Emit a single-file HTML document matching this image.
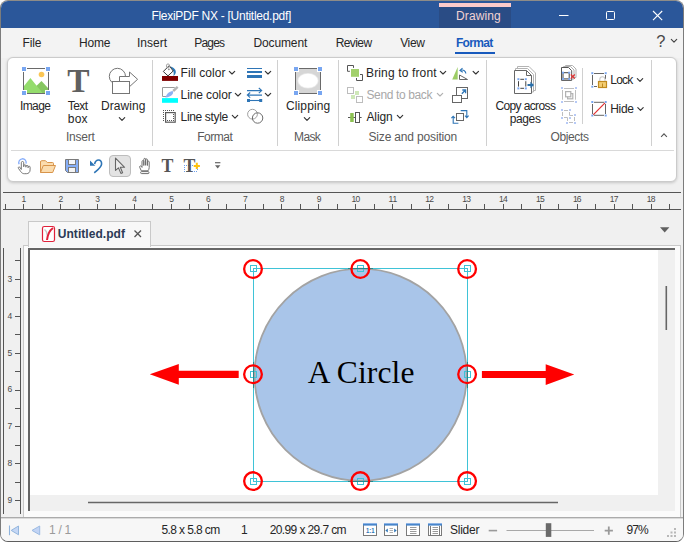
<!DOCTYPE html>
<html><head><meta charset="utf-8"><title>FlexiPDF NX - [Untitled.pdf]</title>
<style>
html,body{margin:0;padding:0;}
body{width:684px;height:542px;overflow:hidden;background:#fff;font-family:"Liberation Sans",sans-serif;position:relative;}
.t{position:absolute;white-space:pre;}
#win{position:absolute;left:0;top:0;width:682px;height:540px;border:1px solid #7c7c7c;border-top-color:#8e8c88;border-bottom-color:#5e5e5e;border-radius:8px;overflow:hidden;background:#f0f0f0;box-sizing:content-box;}
#win>*{position:absolute;}
#title{left:0;top:0;width:682px;height:27px;background:#2b579a;}
#ctx{left:438px;top:2px;width:72px;height:25px;background:#2a4c85;}
#ctx i{position:absolute;left:0;top:0;width:72px;height:4px;background:#fdcaca;}
#menu{left:0;top:27px;width:682px;height:30px;background:#f3f3f3;}
#fmtul{left:454px;top:51px;width:40px;height:2px;background:#185abd;}
#ribbon{left:6px;top:56px;width:670px;height:125px;background:#fff;border-radius:6px;box-sizing:border-box;border:1px solid #cbcbcb;box-shadow:0 1px 3px rgba(0,0,0,.18);}
.sep{width:1px;background:#d0d0d0;top:59px;height:86px;}
#qsel{left:108px;top:154px;width:20px;height:20px;background:#e3e3e3;border:1px solid #bdbdbd;border-radius:4px;}
#rdiv{left:10px;top:149px;width:663px;height:1px;background:#d9d9d9;}
#hruler{left:2px;top:191px;width:678px;height:16px;border-top:1px solid #555;border-bottom:1px solid #555;}
#vruler{left:2px;top:247px;width:16px;height:266px;border-left:1px solid #555;border-right:1px solid #555;}
#frame{left:22px;top:244px;width:656px;height:271px;background:#fbfbfb;border:1px solid #c9c9c9;}
#tab{left:27px;top:220px;width:121px;height:25px;background:#f8f8f8;border:1px solid #c9c9c9;border-bottom:none;}
#view{left:27px;top:247px;width:645px;height:261px;background:#f0f0f0;border-left:2px solid #666;border-top:2px solid #666;}
#page{left:29px;top:249px;width:628px;height:245px;background:#fff;}
#status{left:0;top:516px;width:682px;height:24px;background:#f7f7f7;border-top:1px solid #ababab;box-shadow:inset 0 1px 0 #dadada;}
#ov{position:absolute;left:0;top:0;}

</style></head>
<body>
<div id="win">
 <div id="title"></div>
 <div id="ctx"><i></i></div>
 <div id="menu"></div>
 <div id="fmtul"></div>
 <div id="ribbon"></div>
 <div class="sep" style="left:151px"></div>
 <div class="sep" style="left:276px"></div>
 <div class="sep" style="left:337px"></div>
 <div class="sep" style="left:485px"></div>
 <div class="sep" style="left:650px"></div>
 <div class="sep" style="left:581px;top:67px;height:56px"></div>
 <div id="rdiv"></div>
 <div id="qsel"></div>
 <div id="hruler"></div>
 <div id="vruler"></div>
 <div id="frame"></div>
 <div id="tab"></div>
 <div id="view"></div>
 <div id="page"></div>
 <div id="status"></div>
</div>
<svg id="ov" width="684" height="542" viewBox="0 0 684 542">
<defs>
 <path id="chev" d="M-2.7 -1.4 L0 1.3 L2.7 -1.4" fill="none" stroke-width="1.15" stroke-linecap="round" stroke-linejoin="round"/>
 <rect id="bd" x="-1" y="-1" width="2" height="2" fill="#7aa7f0"/>
</defs>
<!-- window controls -->
<g stroke="#fff" stroke-width="1" fill="none">
 <path d="M559 15.5H568.5"/>
 <rect x="606.5" y="11.5" width="8" height="8" rx="1"/>
 <path d="M653 11l9.2 9.2M662.2 11l-9.2 9.2" stroke-width="1.1"/>
</g>
<use href="#chev" x="674" y="40.8" stroke="#444"/>

<!-- Image icon -->
<g id="ic-image">
 <rect x="23.5" y="68.5" width="25" height="25" fill="#fff" stroke="#6a6a6a" stroke-width="1"/>
 <circle cx="41.5" cy="74.5" r="2.8" fill="#fbc655"/>
 <path d="M36 86.2 L41.5 81 L48 88 V93 H42Z" fill="#86c660"/>
 <path d="M24 86 L30.4 78 L42.5 93 H24Z" fill="#94dc6c"/>
 <g fill="#78a6f1" stroke="#fff" stroke-width="1"><rect x="21.5" y="66.5" width="5" height="5"/><rect x="45.5" y="66.5" width="5" height="5"/><rect x="21.5" y="90.5" width="5" height="5"/><rect x="45.5" y="90.5" width="5" height="5"/></g>
</g>
<!-- Drawing icon -->
<g fill="#fff" stroke="#757575" stroke-width="1">
 <circle cx="117.4" cy="76.4" r="8.1"/>
 <path d="M119.5 76.5 H129.5 V72 L137.6 79.3 L129.5 86.7 V82.2 H119.5Z"/>
 <rect x="112.5" y="81.5" width="17" height="12"/>
</g>
<use href="#chev" x="122" y="119" stroke="#333"/>

<!-- Fill color -->
<rect x="162" y="76" width="16" height="4.9" fill="#800000"/>
<path d="M170.3 66.6C173 67 176 69.3 175.8 72.3C175.7 73.8 174.8 75 173.4 76C173.9 74 173.8 72.4 173.2 71Z" fill="#2b7bba"/>
<path d="M163.3 71.5L169.2 65.6L173.2 71L168 75.9Z" fill="#fff" stroke="#3a3a3a" stroke-width="1"/>
<ellipse cx="168" cy="65.9" rx="1.6" ry="2" fill="none" stroke="#9a9a9a" stroke-width=".9"/>
<circle cx="168.9" cy="69.3" r=".9" fill="#8a8a8a"/>
<use href="#chev" x="232" y="72.7" stroke="#333"/>
<!-- Line color -->
<rect x="162" y="98.1" width="16" height="4.7" fill="#00ffff"/>
<path d="M174.7 87.5H162.5V96.5H166" fill="none" stroke="#9a9a9a" stroke-width="1"/>
<path d="M177.7 86.8L173.2 91" stroke="#b4b4b4" stroke-width="2.4" stroke-linecap="butt"/>
<path d="M165.3 97.6C166.3 94 169.5 91.2 172.6 90.9C174.3 92.7 172 96.8 165.3 97.6Z" fill="#8fb2f3"/>
<use href="#chev" x="238" y="94.7" stroke="#333"/>
<!-- Line style -->
<g fill="#555">
 <rect x="163" y="110" width="1" height="1"/><rect x="165" y="110" width="1" height="1"/><rect x="167" y="110" width="1" height="1"/><rect x="169" y="110" width="1" height="1"/><rect x="171" y="110" width="1" height="1"/><rect x="173" y="110" width="1" height="1"/>
 <rect x="163" y="112" width="1" height="1"/><rect x="163" y="114" width="1" height="1"/><rect x="163" y="116" width="1" height="1"/><rect x="163" y="118" width="1" height="1"/><rect x="163" y="120" width="1" height="1"/>
 <rect x="173" y="114" width="1" height="1"/><rect x="173" y="116" width="1" height="1"/><rect x="173" y="118" width="1" height="1"/><rect x="173" y="120" width="1" height="1"/>
 <rect x="167" y="120" width="1" height="1"/><rect x="169" y="120" width="1" height="1"/><rect x="171" y="120" width="1" height="1"/>
</g>
<rect x="165.6" y="112.6" width="9.6" height="9.6" fill="none" stroke="#5a5a5a" stroke-width="1.2"/>
<use href="#chev" x="235" y="116.8" stroke="#333"/>
<!-- line weight -->
<g fill="#2e75b6"><rect x="247" y="68" width="15" height="1"/><rect x="247" y="71" width="15" height="2"/><rect x="247" y="75" width="15" height="3"/></g>
<use href="#chev" x="268" y="72.7" stroke="#333"/>
<!-- arrows -->
<g stroke="#2e75b6" stroke-width="1.1" fill="none">
 <path d="M247 90.6H261.5M258.8 88 l2.9 2.6 -2.9 2.6"/>
 <path d="M262 95.1H247.5M250.2 92.5 l-2.9 2.6 2.9 2.6"/>
 <path d="M248 100.5H261"/>
</g>
<rect x="247" y="99" width="3" height="3" fill="#2e75b6"/><rect x="259.2" y="99" width="3" height="3" fill="#2e75b6"/>
<use href="#chev" x="268" y="94.7" stroke="#333"/>
<!-- circles -->
<circle cx="252.5" cy="114.2" r="4.9" fill="none" stroke="#a0a0a0" stroke-width="1"/>
<circle cx="257.6" cy="118" r="5.2" fill="none" stroke="#6e6e6e" stroke-width="1"/>

<!-- Clipping -->
<rect x="295.5" y="68.5" width="25" height="25" fill="#d6d6d6" stroke="#6a6a6a" stroke-width="1"/>
<ellipse cx="308" cy="80.8" rx="10.6" ry="7.8" fill="#e9e9e9"/>
<ellipse cx="308" cy="80.8" rx="9.8" ry="7" fill="#fff"/>
<g fill="#78a6f1" stroke="#fff" stroke-width="1"><rect x="293.5" y="66.5" width="5" height="5"/><rect x="317.5" y="66.5" width="5" height="5"/><rect x="293.5" y="90.5" width="5" height="5"/><rect x="317.5" y="90.5" width="5" height="5"/></g>
<use href="#chev" x="307" y="119" stroke="#333"/>

<!-- Bring to front -->
<rect x="351" y="69" width="8" height="7.8" fill="#a2d06c"/>
<path d="M353.5 67.9V65.5H347.5V71.3H349.9M360 74.5H362.5V80.5H356.5V78" fill="none" stroke="#555" stroke-width="1"/>
<use href="#chev" x="443" y="72.7" stroke="#333"/>
<!-- Send to back -->
<rect x="347.5" y="87.5" width="6" height="6" fill="#fff" stroke="#bdbdbd"/>
<rect x="356.5" y="96.5" width="6" height="6" fill="#fff" stroke="#bdbdbd"/>
<rect x="355" y="91" width="4" height="4" fill="#cfe8b8"/><rect x="351" y="95" width="4" height="4" fill="#cfe8b8"/>
<use href="#chev" x="440" y="94.7" stroke="#b0b0b0"/>
<!-- Align -->
<path d="M348 117.5H361.6" stroke="#555" stroke-width="1"/>
<rect x="350.2" y="113" width="3.5" height="9" fill="#8cc152"/>
<rect x="355.5" y="112.5" width="4" height="10" fill="#fff" stroke="#555"/>
<use href="#chev" x="400" y="116.8" stroke="#333"/>
<!-- flip -->
<path d="M452.2 79.6H457.7V67.1Z" fill="#9ccc65"/>
<path d="M459.5 79.5H467.5L459.5 75Z" fill="#fff" stroke="#666" stroke-width="1"/>
<path d="M465.8 73.5C465.8 71 463.5 69.5 461 70.2" fill="none" stroke="#2e75b6" stroke-width="1.2"/>
<path d="M462.5 68.2L460 70.5L462.8 72.2" fill="none" stroke="#2e75b6" stroke-width="1.1"/>
<use href="#chev" x="475.8" y="72.7" stroke="#333"/>
<!-- resize -->
<rect x="456.5" y="87.5" width="11" height="11" fill="#fff" stroke="#666"/>
<rect x="452.5" y="95.5" width="9" height="7" fill="#fff" stroke="#666"/>
<path d="M461.8 93.8L465.3 90.3M462.3 90H465.6V93.3" fill="none" stroke="#2e75b6" stroke-width="1.3"/>
<!-- rotate -->
<rect x="456.5" y="113.5" width="7" height="7" fill="#fff" stroke="#666"/>
<g fill="none" stroke="#2e75b6" stroke-width="1.1">
 <path d="M460.7 110.6H466.8V117.5M465 115.6l1.8 2 1.8-2"/>
 <path d="M458.4 123.2H453.2V116.3M451.4 118.2l1.8-2 1.8 2"/>
</g>

<!-- Copy across pages -->
<g fill="#fff" stroke="#b4b4b4" stroke-width="1">
 <path d="M517.5 66.5H529L535.5 73V90.5H517.5Z"/>
 <path d="M515.5 68.5H527.5L533.5 74.5V92H515.5Z"/>
</g>
<path d="M514.5 70.5H526.5L531.5 75.5V93.5H514.5Z" fill="#fff" stroke="#666" stroke-width="1"/>
<path d="M526.5 70.5V75.5H531.5" fill="none" stroke="#666" stroke-width="1"/>
<path d="M520.3 79.3H524M520.3 88.3H524M518.5 81.2V86.6M525.8 81.2V86.6" fill="none" stroke="#444" stroke-width="1"/>
<use href="#bd" x="518.4" y="79.2"/><use href="#bd" x="525.8" y="79.2"/><use href="#bd" x="518.4" y="88.4"/><use href="#bd" x="525.8" y="88.4"/>
<path d="M527.5 85H532" fill="none" stroke="#2b70aa" stroke-width="2"/>
<path d="M530.4 81.8L534 85L530.4 88.2Z" fill="#2b70aa"/>
<!-- small 1 -->
<g fill="#fff" stroke="#b0b0b0" stroke-width="1">
 <path d="M565.5 65.5H572.5L576 69V77.5H565.5Z"/>
 <path d="M563.5 66.5H570.5L574 70V79H563.5Z"/>
</g>
<path d="M561.5 67.5H568.5L571.7 70.7V80.4H561.5Z" fill="#fff" stroke="#555" stroke-width="1"/>
<rect x="563" y="72.7" width="6.2" height="6.2" fill="none" stroke="#444"/>
<use href="#bd" x="563" y="72.7"/><use href="#bd" x="569.2" y="72.7"/><use href="#bd" x="563" y="78.9"/><use href="#bd" x="569.2" y="78.9"/>
<path d="M570.8 74.5l4 4.2M574.8 74.5l-4 4.2" stroke="#e03030" stroke-width="1.2"/>
<!-- small 2 (disabled) -->
<g fill="#fff" stroke="#bebebe" stroke-width="1">
 <path d="M564 88.5H574M564 101.5H574M562.5 90V99.7M575.5 90V99.7" fill="none"/>
 </g>
<g fill="#fff" stroke="#b2b2b2" stroke-width="1.2"><rect x="567.6" y="93.6" width="5.2" height="5.2"/><rect x="565.6" y="91.6" width="5.2" height="5.2"/></g>
<g fill="#b7caf6"><rect x="561" y="87" width="2" height="2"/><rect x="575" y="87" width="2" height="2"/><rect x="561" y="101" width="2" height="2"/><rect x="575" y="101" width="2" height="2"/></g>
<!-- small 3 (disabled) -->
<path d="M564 110.5H568M562.5 112V116M569.5 112V115.5H573M564 117.5H567.5V121M574.5 117V121M569 122.5H573" fill="none" stroke="#bebebe" stroke-width="1"/>
<g fill="#b7caf6"><rect x="561" y="109" width="2" height="2"/><rect x="569" y="109" width="2" height="2"/><rect x="561" y="117" width="2" height="2"/><rect x="569" y="117" width="2" height="2"/><rect x="574" y="114" width="2" height="2"/><rect x="566" y="122" width="2" height="2"/><rect x="574" y="122" width="2" height="2"/></g>
<!-- Lock -->
<path d="M594 73.5H604M592.5 75V85M594 86.5H597M605.5 75V79" fill="none" stroke="#666" stroke-width="1"/>
<use href="#bd" x="592.3" y="73.2"/><use href="#bd" x="605.7" y="73.2"/><use href="#bd" x="592.3" y="86.7"/>
<path d="M599.8 81V79.3a2.6 2.6 0 0 1 5.2 0V81" fill="none" stroke="#c8c8c8" stroke-width="1.1"/>
<rect x="598.5" y="81.5" width="8" height="6" fill="#f3cd72" stroke="#c08a1e" stroke-width="1.2"/>
<path d="M602.5 83.5V87.5" stroke="#c08a1e" stroke-width="1"/>
<use href="#chev" x="640" y="80" stroke="#333"/>
<!-- Hide -->
<path d="M594 102.3H604M592.5 104V114M594 115.3H604M605.5 104V114" fill="none" stroke="#666" stroke-width="1"/>
<path d="M593.2 114.8L605 102.8" stroke="#e23030" stroke-width="1.2"/>
<use href="#bd" x="592.3" y="102"/><use href="#bd" x="605.7" y="102"/><use href="#bd" x="592.3" y="115.5"/><use href="#bd" x="605.7" y="115.5"/>
<use href="#chev" x="640.5" y="109" stroke="#333"/>
<!-- collapse caret -->
<path d="M661.1 136.8L664 133.9L666.9 136.8" fill="none" stroke="#555" stroke-width="1.1"/>

<!-- quick access toolbar -->
<!-- touch hand -->
<path d="M19.2 164.2a3.7 3.7 0 1 1 6.8-.6" fill="none" stroke="#86adfb" stroke-width="1.3"/>
<path d="M21.3 169.5V162.7a1.2 1.2 0 0 1 2.4 0V166.8V165.9a1.1 1.1 0 0 1 2.2 0V167.2V166.5a1.1 1.1 0 0 1 2.2 0V167.8V167.2a1 1 0 0 1 2 0V169.8c0 2.4-1.5 3.9-3.8 3.9h-2c-1.5 0-2.5-.7-3.4-1.9l-2.5-3.5c-.6-.9.5-1.9 1.4-1.1L21.3 169.5" fill="#fff" stroke="#777" stroke-width="1" stroke-linejoin="round"/>
<!-- folder -->
<path d="M40.5 172.5V162a1.3 1.3 0 0 1 1.3-1.3H45.5l1.8 1.8H52.5a1 1 0 0 1 1 1V165.5" fill="#fbdcae" stroke="#d8944a" stroke-width="1" stroke-linejoin="round"/>
<path d="M40.5 172.5L43.3 165.5H55.5L52.7 172.5Z" fill="#fbdcae" stroke="#d8944a" stroke-width="1" stroke-linejoin="round"/>
<!-- save -->
<path d="M65.5 159.5H78.5V172.5H67.5L65.5 170.5Z" fill="#86aef6" stroke="#7a7a7a" stroke-width="1"/>
<rect x="68.5" y="159.5" width="7" height="5" fill="#f4f6fb" stroke="#7a7a7a" stroke-width="1"/>
<rect x="68.5" y="167.5" width="7" height="5" fill="#f4f4f4" stroke="#7a7a7a" stroke-width="1"/>
<!-- undo -->
<path d="M94.6 164C95.8 158.8 101.8 158.6 101.6 164C101.4 167.4 97.5 170 94.3 172.8" fill="none" stroke="#2e75b6" stroke-width="1.6" stroke-linecap="butt"/>
<path d="M90 160.6V165.8H95.3Z" fill="#2e75b6"/>
<!-- cursor -->
<path d="M115.5 158.2V170.4L118.5 167.9L120.9 173.4L122.6 172.7L120.3 167.3H124.6Z" fill="#ececec" stroke="#666" stroke-width="1.1" stroke-linejoin="round"/>
<!-- hand -->
<path d="M141.3 170.8L139.7 167.3c-.5-1.2 1-2 1.7-.9l.6 1V161.5a.9.9 0 0 1 1.8 0V165.5V159.3a.9.9 0 0 1 1.8 0V165.3V159.8a.9.9 0 0 1 1.8 0V165.5V162a.9.9 0 0 1 1.8 0V167.5c0 1.4-.5 2.3-1.2 3.3Z" fill="#fff" stroke="#6e6e6e" stroke-width="1" stroke-linejoin="round"/>
<rect x="140.6" y="171.6" width="8.4" height="2" rx="1" fill="#fff" stroke="#6e6e6e" stroke-width="1"/>
<!-- T+ -->
<g fill="#6d9eeb"><rect x="184" y="165" width="1" height="1"/><rect x="184" y="171" width="1" height="1"/><rect x="186" y="165" width="1" height="1"/><rect x="186" y="171" width="1" height="1"/><rect x="188" y="165" width="1" height="1"/><rect x="188" y="171" width="1" height="1"/><rect x="190" y="165" width="1" height="1"/><rect x="190" y="171" width="1" height="1"/><rect x="192" y="165" width="1" height="1"/><rect x="192" y="171" width="1" height="1"/><rect x="194" y="165" width="1" height="1"/><rect x="194" y="171" width="1" height="1"/><rect x="196" y="165" width="1" height="1"/><rect x="196" y="171" width="1" height="1"/><rect x="184" y="167" width="1" height="1"/><rect x="197" y="167" width="1" height="1"/><rect x="184" y="169" width="1" height="1"/><rect x="197" y="169" width="1" height="1"/></g>
<path d="M196.8 162.8V169M193.7 165.9H199.9" stroke="#ffc20e" stroke-width="2"/>
<!-- dropdown -->
<path d="M215 162.7H220.4" stroke="#666" stroke-width="1.2"/>
<path d="M215 165.2H220.4L217.7 168.6Z" fill="#666"/>

<!-- tab dropdown triangle -->
<path d="M660 227.2H669.4L664.7 232.4Z" fill="#606060"/>
<!-- pdf icon -->
<rect x="42.5" y="226.5" width="12" height="15" rx="1.8" fill="#fff" stroke="#e0213a" stroke-width="1.2"/>
<path d="M44.5 229.5C46.5 231 47.3 233 47.2 235.5" fill="none" stroke="#c8c8c8" stroke-width="1.3"/>
<path d="M53 228C49.5 230.5 47.6 234.5 47 240" fill="none" stroke="#e0213a" stroke-width="2"/>
<!-- tab close -->
<path d="M134.5 230.5l6.5 6.5M141 230.5l-6.5 6.5" stroke="#555" stroke-width="1.3"/>
<path d="M5.5 204V209M23.5 204V209M42.5 204V209M60.5 204V209M79.5 204V209M97.5 204V209M115.5 204V209M134.5 204V209M152.5 204V209M171.5 204V209M189.5 204V209M208.5 204V209M226.5 204V209M245.5 204V209M263.5 204V209M281.5 204V209M300.5 204V209M318.5 204V209M337.5 204V209M355.5 204V209M374.5 204V209M392.5 204V209M411.5 204V209M429.5 204V209M448.5 204V209M466.5 204V209M484.5 204V209M503.5 204V209M521.5 204V209M540.5 204V209M558.5 204V209M577.5 204V209M595.5 204V209M614.5 204V209M632.5 204V209M651.5 204V209M669.5 204V209" stroke="#555" stroke-width="1" fill="none"/><path d="M15 260.5H20M15 279.5H20M15 297.5H20M15 316.5H20M15 334.5H20M15 353.5H20M15 371.5H20M15 390.5H20M15 408.5H20M15 426.5H20M15 445.5H20M15 463.5H20M15 482.5H20M15 500.5H20" stroke="#555" stroke-width="1" fill="none"/><!-- canvas -->
<g id="canvas">
 <circle cx="360.6" cy="374.8" r="106.1" fill="#a9c5e9" stroke="#a3a3a3" stroke-width="1.8"/>
 <path d="M149.8 374.3L178.8 364V370.8H238.7V378H178.8V384.7Z" fill="#ff0000"/>
 <path d="M574.3 374.5L545.7 364.2V371H481.9V378H545.7V384.9Z" fill="#ff0000"/>
 <g fill="none" stroke="#3fc3d7" stroke-width="1">
  <rect x="250.5" y="265.5" width="6" height="6"/><rect x="250.5" y="371.5" width="6" height="6"/><rect x="250.5" y="478.5" width="6" height="6"/><rect x="357.5" y="265.5" width="6" height="6"/><rect x="357.5" y="478.5" width="6" height="6"/><rect x="464.5" y="265.5" width="6" height="6"/><rect x="464.5" y="371.5" width="6" height="6"/><rect x="464.5" y="478.5" width="6" height="6"/>
  <rect x="253.5" y="268.5" width="214" height="213"/>
 </g>
 <path d="M348 268.5H373M348 481.5H373M253.5 362V388M467.5 362V388" stroke="#23898d" stroke-width="1" fill="none"/>
 <g fill="none" stroke="#ff0000" stroke-width="2.3">
  <circle cx="253" cy="269" r="8.85"/><circle cx="253" cy="374.2" r="8.85"/><circle cx="253" cy="481.1" r="8.85"/><circle cx="360.3" cy="269" r="8.85"/><circle cx="360.3" cy="481.1" r="8.85"/><circle cx="467.1" cy="269" r="8.85"/><circle cx="467.1" cy="374.2" r="8.85"/><circle cx="467.1" cy="481.1" r="8.85"/>
 </g>
</g>
<!-- scrollbars -->
<path d="M666.3 286V330" stroke="#666" stroke-width="1.6"/>
<path d="M88 502.5H558" stroke="#666" stroke-width="1.6"/>
<!-- status icons -->
<g stroke-width="1">
 <path d="M9.5 525.5V535.2" fill="none" stroke="#8fb3dc" stroke-width="1.1"/>
 <path d="M18.5 526L11.2 530.4L18.5 534.8Z" fill="#c5d7f5" stroke="#93b6dd"/>
 <path d="M39.7 526L32 530.4L39.7 534.8Z" fill="#c2d4f5" stroke="#9cbbe2"/>
</g>
<g id="sticons">
 <g fill="#fff" stroke="#7a7a7a" stroke-width="1">
  <rect x="363.5" y="523.5" width="13" height="12"/><rect x="384.5" y="523.5" width="13" height="12"/><rect x="406.5" y="523.5" width="13" height="12"/><rect x="428.5" y="523.5" width="13" height="12"/>
 </g>
 <g fill="#4785cb"><rect x="363" y="523" width="14" height="2.6"/><rect x="384" y="523" width="14" height="2.6"/><rect x="406" y="523" width="14" height="2.6"/><rect x="428" y="523" width="14" height="2.6"/></g>
 <g fill="#8db4e6"><rect x="363" y="523" width="14" height="1"/><rect x="384" y="523" width="14" height="1"/><rect x="406" y="523" width="14" height="1"/><rect x="428" y="523" width="14" height="1"/></g>
 <g fill="#2e75b6"><path d="M385.3 530.5L387.8 528.6V532.4Z"/><path d="M396.7 530.5L394.2 528.6V532.4Z"/></g>
 <g stroke="#b0b0b0" stroke-width="1"><path d="M389.5 528.5H393M389.5 530.5H393M389.5 532.5H393"/>
 </g>
 <g stroke="#9a9a9a" stroke-width="1">
  <path d="M410 527.5H416.5M410 529.5H416.5M410 531.5H416.5M410 533.5H416.5"/>
  <path d="M432.5 527.5H438M432.5 529.5H438M432.5 531.5H438M432.5 533.5H438"/>
 </g>
 <path d="M430.5 526V535M439.5 526V535" stroke="#7a7a7a" stroke-width="1"/>
</g>
<path d="M488.7 530.6H497.1" stroke="#9a9a9a" stroke-width="1.6"/>
<path d="M506.5 530.5H594" stroke="#a8a8a8" stroke-width="1"/>
<rect x="545.8" y="523.2" width="5.5" height="13.7" fill="#6a6a6a"/>
<path d="M604.7 530.6H612.9M608.8 526.5V534.7" stroke="#9a9a9a" stroke-width="1.8"/>
<g fill="#b8b8b8"><rect x="674" y="528" width="2" height="2"/><rect x="674" y="531.5" width="2" height="2"/><rect x="674" y="535" width="2" height="2"/><rect x="670.5" y="531.5" width="2" height="2"/><rect x="670.5" y="535" width="2" height="2"/><rect x="667" y="535" width="2" height="2"/></g>

</svg>

<div id="labels">
<span class="t" style='left:151.42px;top:8.50px;font-size:12px;line-height:15px;color:#fff;letter-spacing:-0.275px;'>FlexiPDF NX - [Untitled.pdf]</span>
<span class="t" style='left:456.02px;top:8.50px;font-size:12px;line-height:15px;color:#f3d3d3;letter-spacing:0.124px;'>Drawing</span>
<span class="t" style='left:22.52px;top:35.50px;font-size:12px;line-height:15px;color:#262626;letter-spacing:-0.109px;'>File</span>
<span class="t" style='left:79.02px;top:35.50px;font-size:12px;line-height:15px;color:#262626;letter-spacing:-0.166px;'>Home</span>
<span class="t" style='left:136.89px;top:35.50px;font-size:12px;line-height:15px;color:#262626;letter-spacing:0.036px;'>Insert</span>
<span class="t" style='left:194.22px;top:35.50px;font-size:12px;line-height:15px;color:#262626;letter-spacing:-0.803px;'>Pages</span>
<span class="t" style='left:253.42px;top:35.50px;font-size:12px;line-height:15px;color:#262626;letter-spacing:-0.119px;'>Document</span>
<span class="t" style='left:335.72px;top:35.50px;font-size:12px;line-height:15px;color:#262626;letter-spacing:-0.601px;'>Review</span>
<span class="t" style='left:400.15px;top:35.50px;font-size:12px;line-height:15px;color:#262626;letter-spacing:-0.358px;'>View</span>
<span class="t" style='left:455.90px;top:35.50px;font-size:12px;line-height:15px;color:#185abd;letter-spacing:-0.645px;font-weight:700;'>Format</span>
<span class="t" style='left:656.27px;top:31.40px;font-size:16.5px;line-height:21px;color:#4a4a4a;letter-spacing:0.000px;'>?</span>
<span class="t" style='left:19.89px;top:98.50px;font-size:12px;line-height:15px;color:#262626;letter-spacing:-0.555px;'>Image</span>
<span class="t" style='left:67.73px;top:98.50px;font-size:12px;line-height:15px;color:#262626;letter-spacing:-0.553px;'>Text</span>
<span class="t" style='left:67.73px;top:111.50px;font-size:12px;line-height:15px;color:#262626;letter-spacing:0.271px;'>box</span>
<span class="t" style='left:101.02px;top:98.50px;font-size:12px;line-height:15px;color:#262626;letter-spacing:0.074px;'>Drawing</span>
<span class="t" style='left:65.89px;top:129.50px;font-size:12px;line-height:15px;color:#5a5a5a;letter-spacing:-0.204px;'>Insert</span>
<span class="t" style='left:180.62px;top:65.50px;font-size:12px;line-height:15px;color:#262626;letter-spacing:0.012px;'>Fill color</span>
<span class="t" style='left:180.62px;top:87.50px;font-size:12px;line-height:15px;color:#262626;letter-spacing:-0.105px;'>Line color</span>
<span class="t" style='left:180.62px;top:109.50px;font-size:12px;line-height:15px;color:#262626;letter-spacing:-0.354px;'>Line style</span>
<span class="t" style='left:197.22px;top:129.50px;font-size:12px;line-height:15px;color:#5a5a5a;letter-spacing:-0.469px;'>Format</span>
<span class="t" style='left:285.89px;top:98.50px;font-size:12px;line-height:15px;color:#262626;letter-spacing:0.146px;'>Clipping</span>
<span class="t" style='left:294.12px;top:129.50px;font-size:12px;line-height:15px;color:#5a5a5a;letter-spacing:-0.668px;'>Mask</span>
<span class="t" style='left:366.02px;top:65.50px;font-size:12px;line-height:15px;color:#262626;letter-spacing:0.144px;'>Bring to front</span>
<span class="t" style='left:366.46px;top:87.50px;font-size:12px;line-height:15px;color:#a8a8a8;letter-spacing:-0.367px;'>Send to back</span>
<span class="t" style='left:366.38px;top:109.50px;font-size:12px;line-height:15px;color:#262626;letter-spacing:-0.071px;'>Align</span>
<span class="t" style='left:368.46px;top:129.50px;font-size:12px;line-height:15px;color:#5a5a5a;letter-spacing:-0.161px;'>Size and position</span>
<span class="t" style='left:495.39px;top:98.50px;font-size:12px;line-height:15px;color:#262626;letter-spacing:-0.616px;'>Copy across</span>
<span class="t" style='left:509.73px;top:111.50px;font-size:12px;line-height:15px;color:#262626;letter-spacing:-0.374px;'>pages</span>
<span class="t" style='left:610.22px;top:72.50px;font-size:12px;line-height:15px;color:#262626;letter-spacing:-0.764px;'>Lock</span>
<span class="t" style='left:610.22px;top:101.50px;font-size:12px;line-height:15px;color:#262626;letter-spacing:-0.290px;'>Hide</span>
<span class="t" style='left:550.43px;top:129.50px;font-size:12px;line-height:15px;color:#5a5a5a;letter-spacing:-0.364px;'>Objects</span>
<span class="t" style='left:57.78px;top:226.50px;font-size:12px;line-height:15px;color:#2b3a55;letter-spacing:0.049px;font-weight:700;'>Untitled.pdf</span>
<span class="t" style='left:49.09px;top:522.50px;font-size:12px;line-height:15px;color:#9a9a9a;letter-spacing:-0.340px;'>1 / 1</span>
<span class="t" style='left:161.42px;top:522.50px;font-size:12px;line-height:15px;color:#262626;letter-spacing:-0.600px;'>5.8 x 5.8 cm</span>
<span class="t" style='left:240.99px;top:522.50px;font-size:12px;line-height:15px;color:#262626;letter-spacing:0.000px;'>1</span>
<span class="t" style='left:269.70px;top:522.50px;font-size:12px;line-height:15px;color:#262626;letter-spacing:-0.607px;'>20.99 x 29.7 cm</span>
<span class="t" style='left:450.06px;top:522.50px;font-size:12px;line-height:15px;color:#262626;letter-spacing:-0.269px;'>Slider</span>
<span class="t" style='left:626.44px;top:522.50px;font-size:12px;line-height:15px;color:#262626;letter-spacing:-0.921px;'>97%</span>
<span class="t" style='left:307.69px;top:352.60px;font-size:31.5px;line-height:39px;color:#000;letter-spacing:0.134px;font-family:"Liberation Serif", serif;'>A Circle</span>
<span class="t" style='left:365.53px;top:526.30px;font-size:8px;line-height:10px;color:#2e75b6;letter-spacing:0.000px;font-weight:700;transform:scaleX(0.7291);transform-origin:0 0;'>1:1</span>
<span class="t" style='left:67.30px;top:59.70px;font-size:33.4px;line-height:42px;color:#606060;letter-spacing:0.000px;font-weight:700;font-family:"Liberation Serif", serif;'>T</span>
<span class="t" style='left:161.61px;top:155.00px;font-size:17.8px;line-height:22px;color:#555;letter-spacing:0.000px;font-weight:700;font-family:"Liberation Serif", serif;'>T</span>
<span class="t" style='left:183.61px;top:155.00px;font-size:17.8px;line-height:22px;color:#555;letter-spacing:0.000px;font-weight:700;font-family:"Liberation Serif", serif;'>T</span>
<span class="t" style='left:21.42px;top:193.50px;font-size:8.5px;line-height:11px;color:#4a4a4a;letter-spacing:0.000px;'>1</span>
<span class="t" style='left:58.43px;top:193.50px;font-size:8.5px;line-height:11px;color:#4a4a4a;letter-spacing:0.000px;'>2</span>
<span class="t" style='left:95.36px;top:193.50px;font-size:8.5px;line-height:11px;color:#4a4a4a;letter-spacing:0.000px;'>3</span>
<span class="t" style='left:132.26px;top:193.50px;font-size:8.5px;line-height:11px;color:#4a4a4a;letter-spacing:0.000px;'>4</span>
<span class="t" style='left:169.14px;top:193.50px;font-size:8.5px;line-height:11px;color:#4a4a4a;letter-spacing:0.000px;'>5</span>
<span class="t" style='left:206.00px;top:193.50px;font-size:8.5px;line-height:11px;color:#4a4a4a;letter-spacing:0.000px;'>6</span>
<span class="t" style='left:242.93px;top:193.50px;font-size:8.5px;line-height:11px;color:#4a4a4a;letter-spacing:0.000px;'>7</span>
<span class="t" style='left:279.83px;top:193.50px;font-size:8.5px;line-height:11px;color:#4a4a4a;letter-spacing:0.000px;'>8</span>
<span class="t" style='left:316.73px;top:193.50px;font-size:8.5px;line-height:11px;color:#4a4a4a;letter-spacing:0.000px;'>9</span>
<span class="t" style='left:351.50px;top:193.50px;font-size:8.5px;line-height:11px;color:#4a4a4a;letter-spacing:-0.789px;'>10</span>
<span class="t" style='left:388.40px;top:193.50px;font-size:8.5px;line-height:11px;color:#4a4a4a;letter-spacing:-0.066px;'>11</span>
<span class="t" style='left:425.30px;top:193.50px;font-size:8.5px;line-height:11px;color:#4a4a4a;letter-spacing:-0.694px;'>12</span>
<span class="t" style='left:462.20px;top:193.50px;font-size:8.5px;line-height:11px;color:#4a4a4a;letter-spacing:-0.748px;'>13</span>
<span class="t" style='left:499.10px;top:193.50px;font-size:8.5px;line-height:11px;color:#4a4a4a;letter-spacing:-0.872px;'>14</span>
<span class="t" style='left:536.00px;top:193.50px;font-size:8.5px;line-height:11px;color:#4a4a4a;letter-spacing:-0.764px;'>15</span>
<span class="t" style='left:572.90px;top:193.50px;font-size:8.5px;line-height:11px;color:#4a4a4a;letter-spacing:-0.748px;'>16</span>
<span class="t" style='left:609.80px;top:193.50px;font-size:8.5px;line-height:11px;color:#4a4a4a;letter-spacing:-0.694px;'>17</span>
<span class="t" style='left:646.70px;top:193.50px;font-size:8.5px;line-height:11px;color:#4a4a4a;letter-spacing:-0.752px;'>18</span>
<span class="t" style='left:7.46px;top:273.70px;font-size:8.5px;line-height:11px;color:#4a4a4a;letter-spacing:0.000px;'>3</span>
<span class="t" style='left:7.46px;top:310.60px;font-size:8.5px;line-height:11px;color:#4a4a4a;letter-spacing:0.000px;'>4</span>
<span class="t" style='left:7.44px;top:347.50px;font-size:8.5px;line-height:11px;color:#4a4a4a;letter-spacing:0.000px;'>5</span>
<span class="t" style='left:7.40px;top:384.40px;font-size:8.5px;line-height:11px;color:#4a4a4a;letter-spacing:0.000px;'>6</span>
<span class="t" style='left:7.43px;top:421.30px;font-size:8.5px;line-height:11px;color:#4a4a4a;letter-spacing:0.000px;'>7</span>
<span class="t" style='left:7.43px;top:458.20px;font-size:8.5px;line-height:11px;color:#4a4a4a;letter-spacing:0.000px;'>8</span>
<span class="t" style='left:7.43px;top:495.10px;font-size:8.5px;line-height:11px;color:#4a4a4a;letter-spacing:0.000px;'>9</span>
</div>
</body></html>
